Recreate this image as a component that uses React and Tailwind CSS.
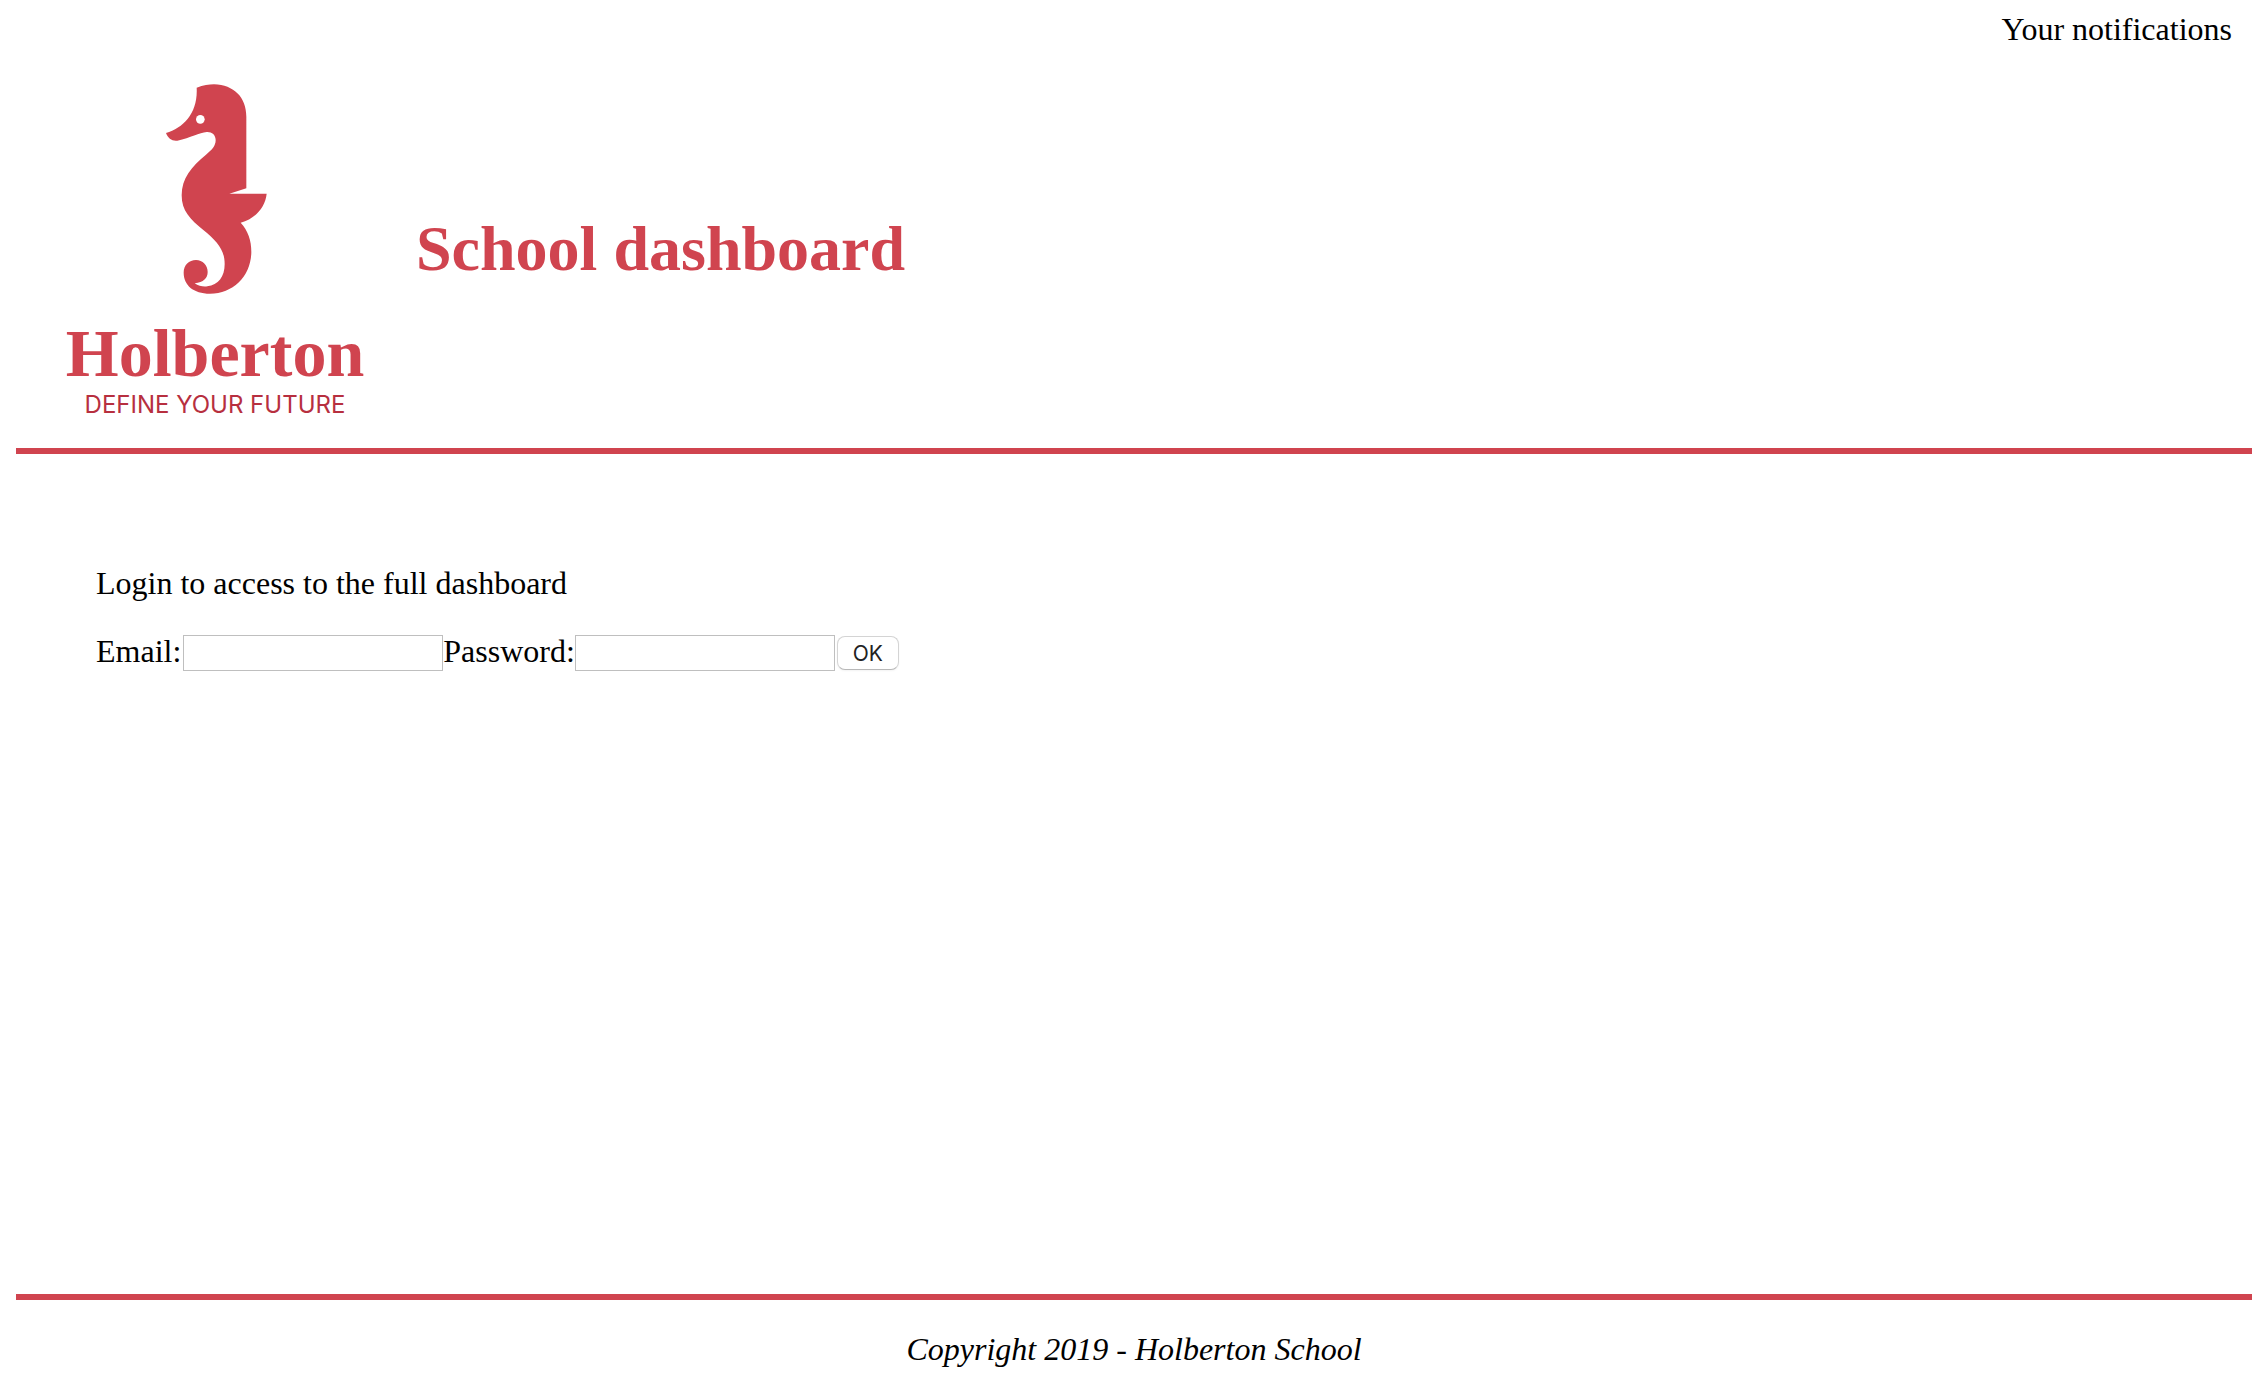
function Seahorse() {
  return (
    <svg viewBox="0 0 450 705" className="h-[235px] w-[150px]" role="img" aria-label="Seahorse">
      <path
        fill="#d0444f"
        d="M170 53 C190 45 207 43 222 43 C282 45 319 82 319 140 L319 355 L268 371 L380 371 C376 412 346 446 302 458 C324 482 334 510 334 546 C333 618 280 671 210 671 C160 671 131 645 131 608 C131 585 147 570 168 570 C188 570 203 585 203 606 C203 624 191 637 164 640 C176 648 190 651 202 649 C235 645 254 620 254 582 C254 540 232 514 190 480 C150 448 125 422 125 376 C125 325 154 290 198 254 C216 239 227 228 227 210 C227 194 215 185 200 186 C178 188 152 203 112 212 C96 214 84 205 78 189 C132 173 174 128 170 53 Z"
      />
      <circle cx="181" cy="148" r="13" fill="#fff" />
    </svg>
  );
}

function Logo() {
  return (
    <div className="flex w-[398px] flex-col items-center text-center">
      <Seahorse />
      <span className="mt-2 font-['Liberation_Serif',serif] text-[68px] leading-[80px] font-bold text-[#d0444f]">
        Holberton
      </span>
      <span className="font-['Inter',sans-serif] text-[24px] leading-6 text-[#b72f3f]">
        DEFINE YOUR FUTURE
      </span>
    </div>
  );
}

export default function App() {
  return (
    <div className="flex min-h-screen flex-col bg-white pr-3.5 pl-4 font-['Liberation_Serif',serif] text-[32px] leading-9 text-black">
      <div className="pt-[11px] pr-5 text-right">Your notifications</div>

      <header className="flex items-start gap-0.5 border-b-6 border-[#d0444f] pt-[23px] pb-[31px]">
        <Logo />
        <h1 className="mt-[142px] text-[64px] leading-[74px] font-bold text-[#d0444f]">
          School dashboard
        </h1>
      </header>

      <main className="flex-1 px-20 pt-[111px]">
        <p>Login to access to the full dashboard</p>
        <form className="mt-8 flex items-start" onSubmit={(e) => e.preventDefault()}>
          <label htmlFor="email" className="mr-0.5">Email:</label>
          <input
            id="email"
            type="email"
            className="mt-0.5 h-9 w-[260px] border border-[#bfbfbf] px-1 text-[22px] outline-none"
          />
          <label htmlFor="password">Password:</label>
          <input
            id="password"
            type="password"
            className="mt-0.5 h-9 w-[260px] border border-[#bfbfbf] px-1 text-[22px] outline-none"
          />
          <button
            type="submit"
            className="mt-[3px] ml-0.5 h-[34px] w-[62px] rounded-lg border border-[#d4d4d4] border-b-[#b8b8b8] bg-white pt-0.5 font-['Inter',sans-serif] text-[21px] leading-[30px] text-[#222] shadow-xs"
          >
            OK
          </button>
        </form>
      </main>

      <footer className="border-t-6 border-[#d0444f] pt-[31px] pb-[25px] text-center italic">
        <p>Copyright 2019 - Holberton School</p>
      </footer>
    </div>
  );
}
